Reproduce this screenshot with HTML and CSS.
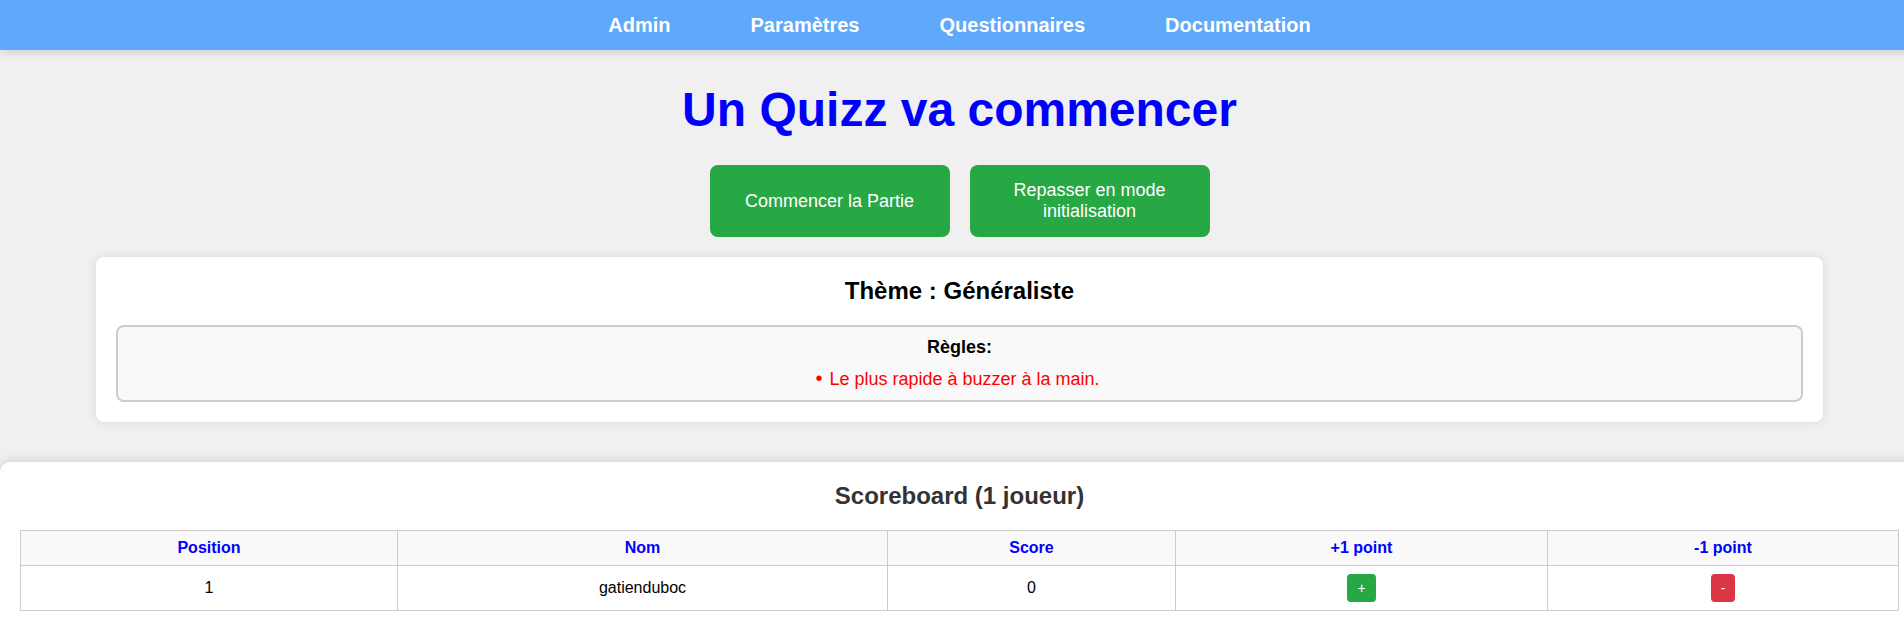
FILE: index.html
```html
<!DOCTYPE html>
<html lang="fr">
<head>
<meta charset="utf-8">
<title>Un Quizz va commencer</title>
<link rel="stylesheet" href="styles.css">
</head>
<body>
<div class="page">
  <nav class="nav">
    <a href="#">Admin</a>
    <a href="#">Paramètres</a>
    <a href="#">Questionnaires</a>
    <a href="#">Documentation</a>
  </nav>
  <main class="main">
    <h1 class="title">Un Quizz va commencer</h1>
    <div class="actions">
      <button class="btn-big">Commencer la Partie</button>
      <button class="btn-big">Repasser en mode initialisation</button>
    </div>
    <section class="card">
      <h2 class="theme">Thème : Généraliste</h2>
      <div class="rules">
        <div class="rules-title">Règles:</div>
        <ul class="rules-list">
          <li>Le plus rapide à buzzer à la main.</li>
        </ul>
      </div>
    </section>
  </main>
  <section class="scoreboard">
    <h2 class="sb-title">Scoreboard (1 joueur)</h2>
    <table class="sb-table">
      <colgroup>
        <col class="c1"><col class="c2"><col class="c3"><col class="c4"><col class="c5">
      </colgroup>
      <thead>
        <tr><th>Position</th><th>Nom</th><th>Score</th><th>+1 point</th><th>-1 point</th></tr>
      </thead>
      <tbody>
        <tr>
          <td>1</td>
          <td>gatienduboc</td>
          <td>0</td>
          <td><button class="btn-sm plus">+</button></td>
          <td><button class="btn-sm minus">-</button></td>
        </tr>
      </tbody>
    </table>
  </section>
</div>
</body>
</html>
```
FILE: styles.css
```css
html, body {
  margin: 0;
  padding: 0;
}
body {
  background: #f0f0f0;
  font-family: "Liberation Sans", Arial, sans-serif;
  overflow: hidden;
}
.page {
  width: 1919px;
}
.nav {
  height: 50px;
  background: #60a8fa;
  display: flex;
  justify-content: center;
  align-items: center;
  gap: 80px;
  box-shadow: 0 2px 10px rgba(0, 0, 0, 0.15);
}
.nav a {
  color: #fff;
  font-weight: bold;
  font-size: 20px;
  text-decoration: none;
}
.main {
  display: flex;
  flex-direction: column;
  align-items: center;
}
.title {
  margin: 32px 0 28px;
  font-size: 48px;
  font-weight: bold;
  color: #0000ff;
}
.actions {
  display: flex;
  gap: 20px;
}
.btn-big {
  width: 240px;
  padding: 15px 20px;
  border: 0;
  border-radius: 8px;
  background: #28a745;
  color: #fff;
  font-family: "Liberation Sans", Arial, sans-serif;
  font-size: 18px;
  line-height: 21px;
}
.card {
  width: 90%;
  box-sizing: border-box;
  margin-top: 20px;
  padding: 20px;
  background: #fff;
  border-radius: 8px;
  box-shadow: 0 0 10px rgba(0, 0, 0, 0.1);
  text-align: center;
}
.theme {
  margin: 0 0 20px;
  font-size: 24px;
  color: #000;
}
.rules {
  border: 2px solid #ccc;
  border-radius: 8px;
  background: #f9f9f9;
  padding: 10px;
}
.rules-title {
  font-size: 18px;
  font-weight: bold;
  color: #000;
  margin-bottom: 11px;
}
.rules-list {
  list-style: none;
  margin: 0;
  padding: 0;
  color: #ff0000;
  font-size: 18px;
}
.rules-list li::before {
  content: "•";
  display: inline-block;
  margin-right: 7px;
  font-size: 20px;
  line-height: 18px;
}
.rules-list li::after {
  content: "";
  display: inline-block;
  width: 4px;
}
.scoreboard {
  margin-top: 40px;
  padding: 20px 20px 22px;
  background: #fff;
  border-radius: 10px 10px 0 0;
  box-shadow: 0 -2px 10px rgba(0, 0, 0, 0.12);
  text-align: center;
}
.sb-title {
  margin: 0 0 20px;
  font-size: 24px;
  color: #333;
}
.sb-table {
  width: 100%;
  border-collapse: collapse;
  table-layout: fixed;
  font-size: 16px;
}
.c1 { width: 377px; }
.c2 { width: 490px; }
.c3 { width: 288px; }
.c4 { width: 372px; }
.c5 { width: auto; }
.sb-table th,
.sb-table td {
  border: 1px solid #ccc;
  padding: 8px;
  text-align: center;
}
.sb-table th {
  background: #f9f9f9;
  color: #0000ff;
  font-weight: bold;
}
.sb-table td {
  color: #000;
}
.btn-sm {
  border: 0;
  border-radius: 4px;
  padding: 6px 10px;
  color: #fff;
  font-family: "Liberation Sans", Arial, sans-serif;
  font-size: 14px;
  line-height: 16px;
  vertical-align: middle;
}
.plus { background: #28a745; }
.minus { background: #dc3545; }
```
